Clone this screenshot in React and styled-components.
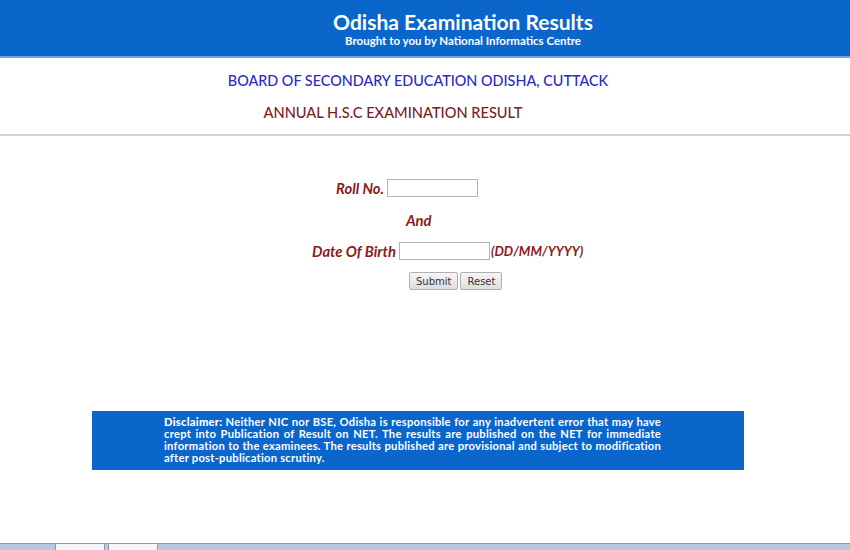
import styled, { createGlobalStyle } from "styled-components";

const GlobalStyle = createGlobalStyle`
  html, body {
    margin: 0;
    padding: 0;
    background: #ffffff;
  }
  body {
    font-family: Lato, "Liberation Sans", sans-serif;
  }
`;

const Page = styled.div`
  width: 850px;
  height: 550px;
  display: flex;
  flex-direction: column;
  overflow: hidden;
  background: #ffffff;
`;

const Header = styled.header`
  height: 58px;
  box-sizing: border-box;
  background: #0b66cc;
  border-bottom: 2px solid #6fa6e4;
  display: flex;
  flex-direction: column;
  align-items: center;
  padding: 9px 0 0 76px;
`;

const SiteTitle = styled.h1`
  margin: 0;
  font-size: 21px;
  line-height: 25px;
  font-weight: 700;
  color: #ffffff;
`;

const SiteSubtitle = styled.p`
  margin: 0;
  font-size: 11.5px;
  line-height: 13px;
  font-weight: 700;
  color: #ffffff;
`;

const Heading = styled.h2`
  margin: 0;
  text-align: center;
  font-size: ${(p) => p.size}px;
  font-weight: 500;
  color: ${(p) => p.color};
  padding-right: ${(p) => p.shift}px;
  padding-top: ${(p) => p.top}px;
  line-height: 18px;
`;

const Divider = styled.hr`
  margin: 12px 0 0;
  border: 0;
  height: 2px;
  background: #d4d4d4;
`;

const Form = styled.form`
  display: flex;
  flex-direction: column;
  padding-top: 42px;
`;

const Row = styled.div`
  display: flex;
  align-items: center;
  height: ${(p) => p.h}px;
  padding-left: ${(p) => p.left}px;
`;

const Label = styled.label`
  font-size: 14.8px;
  font-style: italic;
  font-weight: 700;
  color: #8a1c1c;
  margin-right: 3px;
`;

const Suffix = styled.span`
  font-size: 13.2px;
  font-style: italic;
  font-weight: 700;
  color: #8a1c1c;
  margin-left: 1px;
`;

const TextBox = styled.input`
  width: 91px;
  height: 18px;
  box-sizing: border-box;
  border: 1px solid #b4b4b4;
  background: #ffffff;
  padding: 0 2px;
  margin: 0;
`;

const Button = styled.button`
  height: 18px;
  padding: 0 6px;
  margin: 0 2px 0 0;
  font-family: "DejaVu Sans", sans-serif;
  font-size: 10px;
  color: #333333;
  border: 1px solid #b0b0b0;
  border-radius: 2px;
  background: linear-gradient(#f6f6f6, #dedede);
`;

const Disclaimer = styled.div`
  margin: 109px 0 0 92px;
  width: 652px;
  height: 59px;
  box-sizing: border-box;
  background: #0b66cc;
  padding: 5px 83px 0 72px;
  color: #ffffff;
  font-size: 11.2px;
  letter-spacing: 0.25px;
  line-height: 12px;
  text-align: justify;
  font-weight: 700;
`;

const DisclaimerLead = styled.strong`
  font-weight: 900;
  margin-right: 3px;
`;

const Spacer = styled.div`
  flex: 1;
`;

const TaskBar = styled.div`
  height: 6px;
  background: #b9c8db;
  border-top: 1px solid #8e9aa8;
  display: flex;
  gap: 3px;
  padding-left: 55px;
`;

const Tab = styled.div`
  width: 48px;
  background: #f4f6f9;
  border: 1px solid #8e9aa8;
  border-bottom: 0;
  margin-top: -1px;
`;

export default function App() {
  return (
    <Page>
      <GlobalStyle />
      <Header>
        <SiteTitle>Odisha Examination Results</SiteTitle>
        <SiteSubtitle>Brought to you by National Informatics Centre</SiteSubtitle>
      </Header>
      <Heading size={14.4} color="#2b2bc4" shift={14} top={14}>
        BOARD OF SECONDARY EDUCATION ODISHA, CUTTACK
      </Heading>
      <Heading size={14.6} color="#7a1e1e" shift={64} top={14}>
        ANNUAL H.S.C EXAMINATION RESULT
      </Heading>
      <Divider />
      <Form onSubmit={(e) => e.preventDefault()}>
        <Row h={20} left={336}>
          <Label>Roll No.</Label>
          <TextBox type="text" />
        </Row>
        <Row h={43} left={406}>
          <Label>And</Label>
        </Row>
        <Row h={19} left={312}>
          <Label>Date Of Birth</Label>
          <TextBox type="text" />
          <Suffix>(DD/MM/YYYY)</Suffix>
        </Row>
        <Row h={42} left={409}>
          <Button type="submit">Submit</Button>
          <Button type="reset">Reset</Button>
        </Row>
      </Form>
      <Disclaimer>
        <DisclaimerLead>Disclaimer:</DisclaimerLead>Neither NIC nor BSE, Odisha
        is responsible for any inadvertent error that may have crept into
        Publication of Result on NET. The results are published on the NET for
        immediate information to the examinees. The results published are
        provisional and subject to modification after post-publication
        scrutiny.
      </Disclaimer>
      <Spacer />
      <TaskBar>
        <Tab />
        <Tab />
      </TaskBar>
    </Page>
  );
}
